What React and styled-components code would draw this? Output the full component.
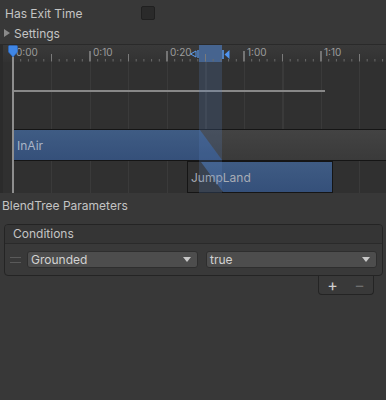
import React from 'react';
import styled, { createGlobalStyle } from 'styled-components';

const GlobalStyle = createGlobalStyle`
  body {
    margin: 0;
    background: #383838;
    font-family: Inter, "Noto Sans", sans-serif;
    font-size: 12px;
    color: #c4c4c4;
  }
`;

const Panel = styled.div`
  width: 386px;
  height: 400px;
  overflow: hidden;
  background: #383838;
  padding-top: 3px;
  box-sizing: border-box;
`;

const FieldRow = styled.div`
  display: grid;
  grid-template-columns: 136px 14px;
  align-items: center;
  height: 20px;
  padding-left: 5px;
`;

const Checkbox = styled.div`
  width: 12px;
  height: 12px;
  background: #2a2a2a;
  border: 1px solid #202020;
  border-radius: 2px;
`;

const Foldout = styled.div`
  display: flex;
  align-items: center;
  gap: 4px;
  height: 20px;
  padding-left: 4px;
`;

const Arrow = styled.span`
  width: 0;
  height: 0;
  border-top: 4px solid transparent;
  border-bottom: 4px solid transparent;
  border-left: 6px solid #8a8a8a;
`;

const Timeline = styled.div`
  position: relative;
  margin-top: 1px;
  width: 386px;
`;

const Ruler = styled.svg`
  display: block;
`;

const Track = styled.div`
  position: relative;
  height: ${p => p.$h}px;
  background:
    linear-gradient(90deg, #2b2b2b 0 3px, transparent 3px),
    repeating-linear-gradient(90deg, #3a3a3a 0 1px, transparent 1px 38.5px) 13px 0 / 100% 100%,
    #303030;
`;

const Curve = styled.div`
  position: absolute;
  top: 28px;
  left: 13px;
  width: 312px;
  height: 2px;
  background: #888;
`;

const Clip = styled.div`
  position: relative;
  margin-left: ${p => p.$left}px;
  width: ${p => p.$width};
  height: 100%;
  box-sizing: border-box;
  border: 1px solid #151515;
  border-right: ${p => (p.$open ? 'none' : '1px solid #151515')};
  background: ${p => p.$base};
  display: flex;
  align-items: center;
  overflow: hidden;
`;

const ClipFill = styled.div`
  position: absolute;
  inset: 0;
  background: linear-gradient(#3f5c84, #35507a);
  clip-path: ${p => p.$shape};
`;

const ClipName = styled.span`
  position: relative;
  padding-left: ${p => p.$pad}px;
  color: ${p => p.$color};
  font-size: 12px;
`;

const TransitionBand = styled.div`
  position: absolute;
  left: 199px;
  width: 23px;
  top: 18px;
  bottom: 0;
  background: rgba(86, 128, 190, 0.22);
  pointer-events: none;
`;

const Playhead = styled.div`
  position: absolute;
  left: 12px;
  width: 2px;
  top: 13px;
  bottom: 0;
  background: #8e8e8e;
`;

const SectionLabel = styled.div`
  height: 18px;
  line-height: 18px;
  padding: 4px 0 0 2px;
`;

const Conditions = styled.div`
  margin: 9px 3px 0 4px;
`;

const Box = styled.div`
  border: 1px solid #242424;
  border-radius: 4px;
  background: #393939;
  overflow: hidden;
`;

const BoxHeader = styled.div`
  height: 18px;
  line-height: 18px;
  padding-left: 8px;
  background: #353535;
  border-bottom: 1px solid #2a2a2a;
`;

const BoxBody = styled.div`
  display: flex;
  align-items: center;
  gap: 8px;
  height: 31px;
  padding-left: 5px;
`;

const Handle = styled.div`
  width: 11px;
  height: 4px;
  border-top: 1px solid #5a5a5a;
  border-bottom: 1px solid #5a5a5a;
  margin-right: -2px;
`;

const Dropdown = styled.div`
  display: flex;
  align-items: center;
  justify-content: space-between;
  width: 171px;
  height: 17px;
  box-sizing: border-box;
  padding: 0 6px 0 3px;
  background: #4d4d4d;
  border: 1px solid #2e2e2e;
  border-radius: 3px;
  color: #d2d2d2;
`;

const Caret = styled.span`
  width: 0;
  height: 0;
  border-left: 4px solid transparent;
  border-right: 4px solid transparent;
  border-top: 5px solid #c8c8c8;
`;

const Footer = styled.div`
  display: flex;
  justify-content: space-around;
  align-items: center;
  margin-left: auto;
  margin-right: 9px;
  width: 56px;
  height: 19px;
  box-sizing: border-box;
  border: 1px solid #242424;
  border-top: none;
  border-radius: 0 0 4px 4px;
  background: #393939;
  font-size: 16px;
`;

const Sign = styled.span`
  color: ${p => (p.$dim ? '#6e6e6e' : '#cfcfcf')};
  line-height: 16px;
`;

const labels = ['0:00', '0:10', '0:20', '1:00', '1:10'];

const RulerDrawing = () => {
  const ticks = [];
  for (let k = 0; k < 49; k++) {
    const x = 13 + k * 7.7;
    let y1 = 15;
    let color = '#6a6a6a';
    if (k % 10 === 0) { y1 = 7; color = '#8a8a8a'; }
    else if (k % 5 === 0) { y1 = 10; color = '#7a7a7a'; }
    ticks.push(<line key={k} x1={x} x2={x} y1={y1} y2={17.5} stroke={color} strokeWidth={k % 10 === 0 ? 1.5 : 1} />);
  }
  return (
    <Ruler width="386" height="18" viewBox="0 0 386 18">
      <defs>
        <linearGradient id="rulerBg" x1="0" y1="0" x2="0" y2="1">
          <stop offset="0" stopColor="#3a3a3a" />
          <stop offset="1" stopColor="#323232" />
        </linearGradient>
      </defs>
      <rect width="386" height="18" fill="url(#rulerBg)" />
      <rect width="3" height="18" fill="#2b2b2b" />
      <line x1="0" x2="386" y1="0.5" y2="0.5" stroke="#2a2a2a" />
      <rect x="199" y="1" width="23" height="17" fill="#46648f" />
      {ticks}
      {labels.map((t, i) => (
        <text key={t} x={13 + i * 77 + 3} y="12" fontSize="10" fill="#9c9c9c" fontFamily="Inter, sans-serif">{t}</text>
      ))}
      <path d="M196 7 L190.5 10 L196 13 Z" fill="none" stroke="#5b9cf0" strokeWidth="1" />
      <line x1="198" x2="198" y1="6" y2="14" stroke="#5b9cf0" strokeWidth="1.2" />
      <line x1="223" x2="223" y1="6" y2="15" stroke="#5b9cf0" strokeWidth="1.5" />
      <path d="M229.5 6 L224.5 10.5 L229.5 15 Z" fill="#4f93ee" />
      <path d="M8.5 2.5 Q8.5 1.5 9.5 1.5 H16.5 Q17.5 1.5 17.5 2.5 V8 L13 13 L8.5 8 Z" fill="#3f86e6" stroke="#2a66c0" strokeWidth="0.6" />
    </Ruler>
  );
};

const App = () => {
  return (
    <>
      <GlobalStyle />
      <Panel>
        <FieldRow>
          <span>Has Exit Time</span>
          <Checkbox />
        </FieldRow>
        <Foldout>
          <Arrow />
          <span>Settings</span>
        </Foldout>
        <Timeline>
          <RulerDrawing />
          <Track $h={67}>
            <Curve />
          </Track>
          <Track $h={32}>
            <Clip $left={13} $width="373px" $open $base="linear-gradient(#434343, #3a3a3a)">
              <ClipFill $shape="polygon(0 0, 186px 0, 208px 100%, 0 100%)" />
              <ClipName $pad={3} $color="#a9b4c6">InAir</ClipName>
            </Clip>
          </Track>
          <Track $h={32}>
            <Clip $left={187} $width="146px" $base="#313131">
              <ClipFill $shape="polygon(13px 0, 100% 0, 100% 100%, 35px 100%)" />
              <ClipName $pad={3} $color="#a8adb5">JumpLand</ClipName>
            </Clip>
          </Track>
          <TransitionBand />
          <Playhead />
        </Timeline>
        <SectionLabel>BlendTree Parameters</SectionLabel>
        <Conditions>
          <Box>
            <BoxHeader>Conditions</BoxHeader>
            <BoxBody>
              <Handle />
              <Dropdown>
                <span>Grounded</span>
                <Caret />
              </Dropdown>
              <Dropdown>
                <span>true</span>
                <Caret />
              </Dropdown>
            </BoxBody>
          </Box>
          <Footer>
            <Sign>+</Sign>
            <Sign $dim>−</Sign>
          </Footer>
        </Conditions>
      </Panel>
    </>
  );
};

export default App;
